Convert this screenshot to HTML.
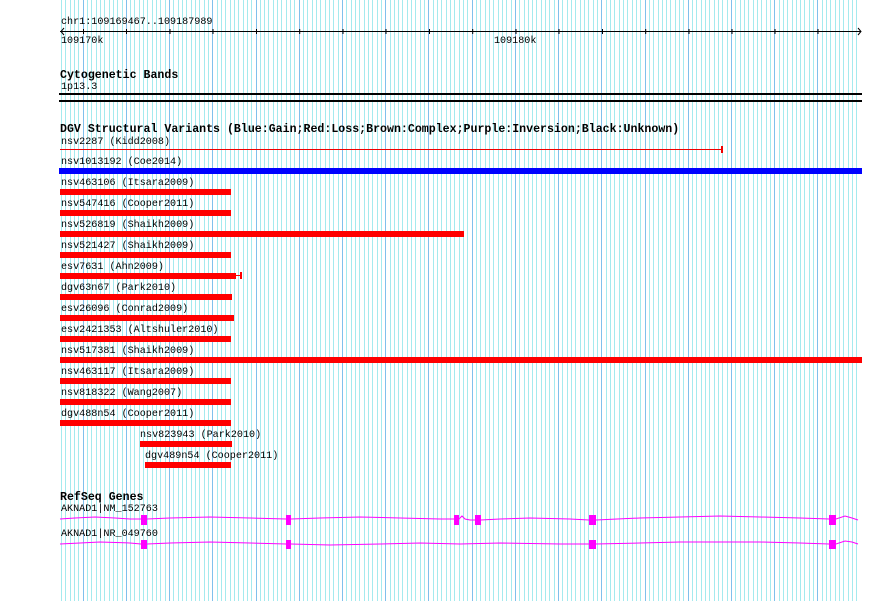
<!DOCTYPE html>
<html><head><meta charset="utf-8"><style>
html,body{margin:0;padding:0;background:#fff;}
svg{display:block}
text{font-family:"Liberation Mono",monospace;font-size:10.1px;fill:#000}
.b{font-weight:bold;font-size:11.6px}
rect{shape-rendering:crispEdges}
</style></head><body>
<svg id="s" width="890" height="601" viewBox="0 0 890 601" xmlns="http://www.w3.org/2000/svg">
<g id="grid"></g>

<text x="61" y="24">chr1:109169467..109187989</text>
<line x1="60" y1="31.5" x2="861" y2="31.5" stroke="#000" stroke-width="1"/>
<path d="M64 28 L61 31.5 L64 35 M858 28 L861 31.5 L858 35" stroke="#000" fill="none"/>
<g stroke="#000">
<line x1="83.5" y1="29" x2="83.5" y2="34"/><line x1="126.5" y1="29" x2="126.5" y2="34"/><line x1="170" y1="29" x2="170" y2="34"/><line x1="213" y1="29" x2="213" y2="34"/><line x1="256.5" y1="29" x2="256.5" y2="34"/><line x1="299.7" y1="29" x2="299.7" y2="34"/><line x1="343" y1="29" x2="343" y2="34"/><line x1="386" y1="29" x2="386" y2="34"/><line x1="429.5" y1="29" x2="429.5" y2="34"/><line x1="472.7" y1="29" x2="472.7" y2="34"/><line x1="516" y1="29" x2="516" y2="34"/><line x1="559" y1="29" x2="559" y2="34"/><line x1="602.5" y1="29" x2="602.5" y2="34"/><line x1="645.7" y1="29" x2="645.7" y2="34"/><line x1="689" y1="29" x2="689" y2="34"/><line x1="732" y1="29" x2="732" y2="34"/><line x1="775" y1="29" x2="775" y2="34"/><line x1="818" y1="29" x2="818" y2="34"/>
</g>
<text x="61" y="43">109170k</text>
<text x="494" y="43">109180k</text>

<text class="b" x="60" y="78">Cytogenetic Bands</text>
<text x="61" y="89">1p13.3</text>
<rect x="59" y="93" width="803" height="2" fill="#000"/>
<rect x="59" y="100" width="803" height="2" fill="#000"/>

<text class="b" x="60" y="132">DGV Structural Variants (Blue:Gain;Red:Loss;Brown:Complex;Purple:Inversion;Black:Unknown)</text>
<text x="61" y="144">nsv2287 (Kidd2008)</text>
<rect x="60" y="149" width="662" height="1" fill="#e00"/>
<rect x="721" y="146" width="2" height="7" fill="#e00"/>
<text x="61" y="164">nsv1013192 (Coe2014)</text>
<rect x="59" y="168" width="803" height="6" fill="#0000ff"/>

<g fill="#ff0000">
<rect x="60" y="189" width="171" height="6"/>
<rect x="60" y="210" width="171" height="6"/>
<rect x="60" y="231" width="404" height="6"/>
<rect x="60" y="252" width="171" height="6"/>
<rect x="60" y="273" width="176" height="6"/>
<rect x="236" y="275" width="5" height="1"/><rect x="240" y="272" width="2" height="7"/>
<rect x="60" y="294" width="172" height="6"/>
<rect x="60" y="315" width="174" height="6"/>
<rect x="60" y="336" width="171" height="6"/>
<rect x="60" y="357" width="802" height="6"/>
<rect x="60" y="378" width="171" height="6"/>
<rect x="60" y="399" width="171" height="6"/>
<rect x="60" y="420" width="171" height="6"/>
<rect x="140" y="441" width="92" height="6"/>
<rect x="145" y="462" width="86" height="6"/>
</g>
<text x="61" y="185">nsv463106 (Itsara2009)</text>
<text x="61" y="206">nsv547416 (Cooper2011)</text>
<text x="61" y="227">nsv526819 (Shaikh2009)</text>
<text x="61" y="248">nsv521427 (Shaikh2009)</text>
<text x="61" y="269">esv7631 (Ahn2009)</text>
<text x="61" y="290">dgv63n67 (Park2010)</text>
<text x="61" y="311">esv26096 (Conrad2009)</text>
<text x="61" y="332">esv2421353 (Altshuler2010)</text>
<text x="61" y="353">nsv517381 (Shaikh2009)</text>
<text x="61" y="374">nsv463117 (Itsara2009)</text>
<text x="61" y="395">nsv818322 (Wang2007)</text>
<text x="61" y="416">dgv488n54 (Cooper2011)</text>
<text x="140" y="437">nsv823943 (Park2010)</text>
<text x="145" y="458">dgv489n54 (Cooper2011)</text>

<text class="b" x="60" y="500">RefSeq Genes</text>
<text x="61" y="511">AKNAD1|NM_152763</text>
<polyline fill="none" stroke="#ff00ff" stroke-width="1" points="60,519 75,518 95,517 115,518 130,519 141,519 147,519 170,518 210,517 250,518 286,519 291,519 320,518 360,517 400,518 440,519 454,519 459,519 462,516 465,519 470,520 475,520 481,520 500,519 530,518 570,519 589,520 596,520 640,518 680,517 720,516 760,517 800,518 829,519 836,519 845,516 852,518 858,520"/>
<g fill="#ff00ff">
<rect x="141" y="515" width="6" height="10"/><rect x="286" y="515" width="5" height="10"/><rect x="454" y="515" width="5" height="10"/><rect x="475" y="515" width="6" height="10"/><rect x="589" y="515" width="7" height="10"/><rect x="829" y="515" width="7" height="10"/>
</g>
<text x="61" y="536">AKNAD1|NR_049760</text>
<polyline fill="none" stroke="#ff00ff" stroke-width="1" points="60,544 80,543 100,542 130,543 141,544 147,544 170,543 210,542 250,543 286,544 291,544 330,545 380,544 420,543 460,544 500,543 560,544 589,544 596,544 640,543 680,542 720,542 760,542 800,543 829,544 836,544 845,541 852,542 858,544"/>
<g fill="#ff00ff">
<rect x="141" y="540" width="6" height="9"/><rect x="286" y="540" width="5" height="9"/><rect x="589" y="540" width="7" height="9"/><rect x="829" y="540" width="7" height="9"/>
</g>
</svg>
<script>
(function(){
var g=document.getElementById('grid'),ns='http://www.w3.org/2000/svg';
for(var i=0;i<=184;i++){
var x=Math.round(61+4.3225*i);
var r=document.createElementNS(ns,'rect');
r.setAttribute('x',x);r.setAttribute('y',0);r.setAttribute('width',1);r.setAttribute('height',601);
r.setAttribute('fill',(i%10==5)?'#80c0ec':'#a4eaee');
g.appendChild(r);
}
})();
</script>
</body></html>
